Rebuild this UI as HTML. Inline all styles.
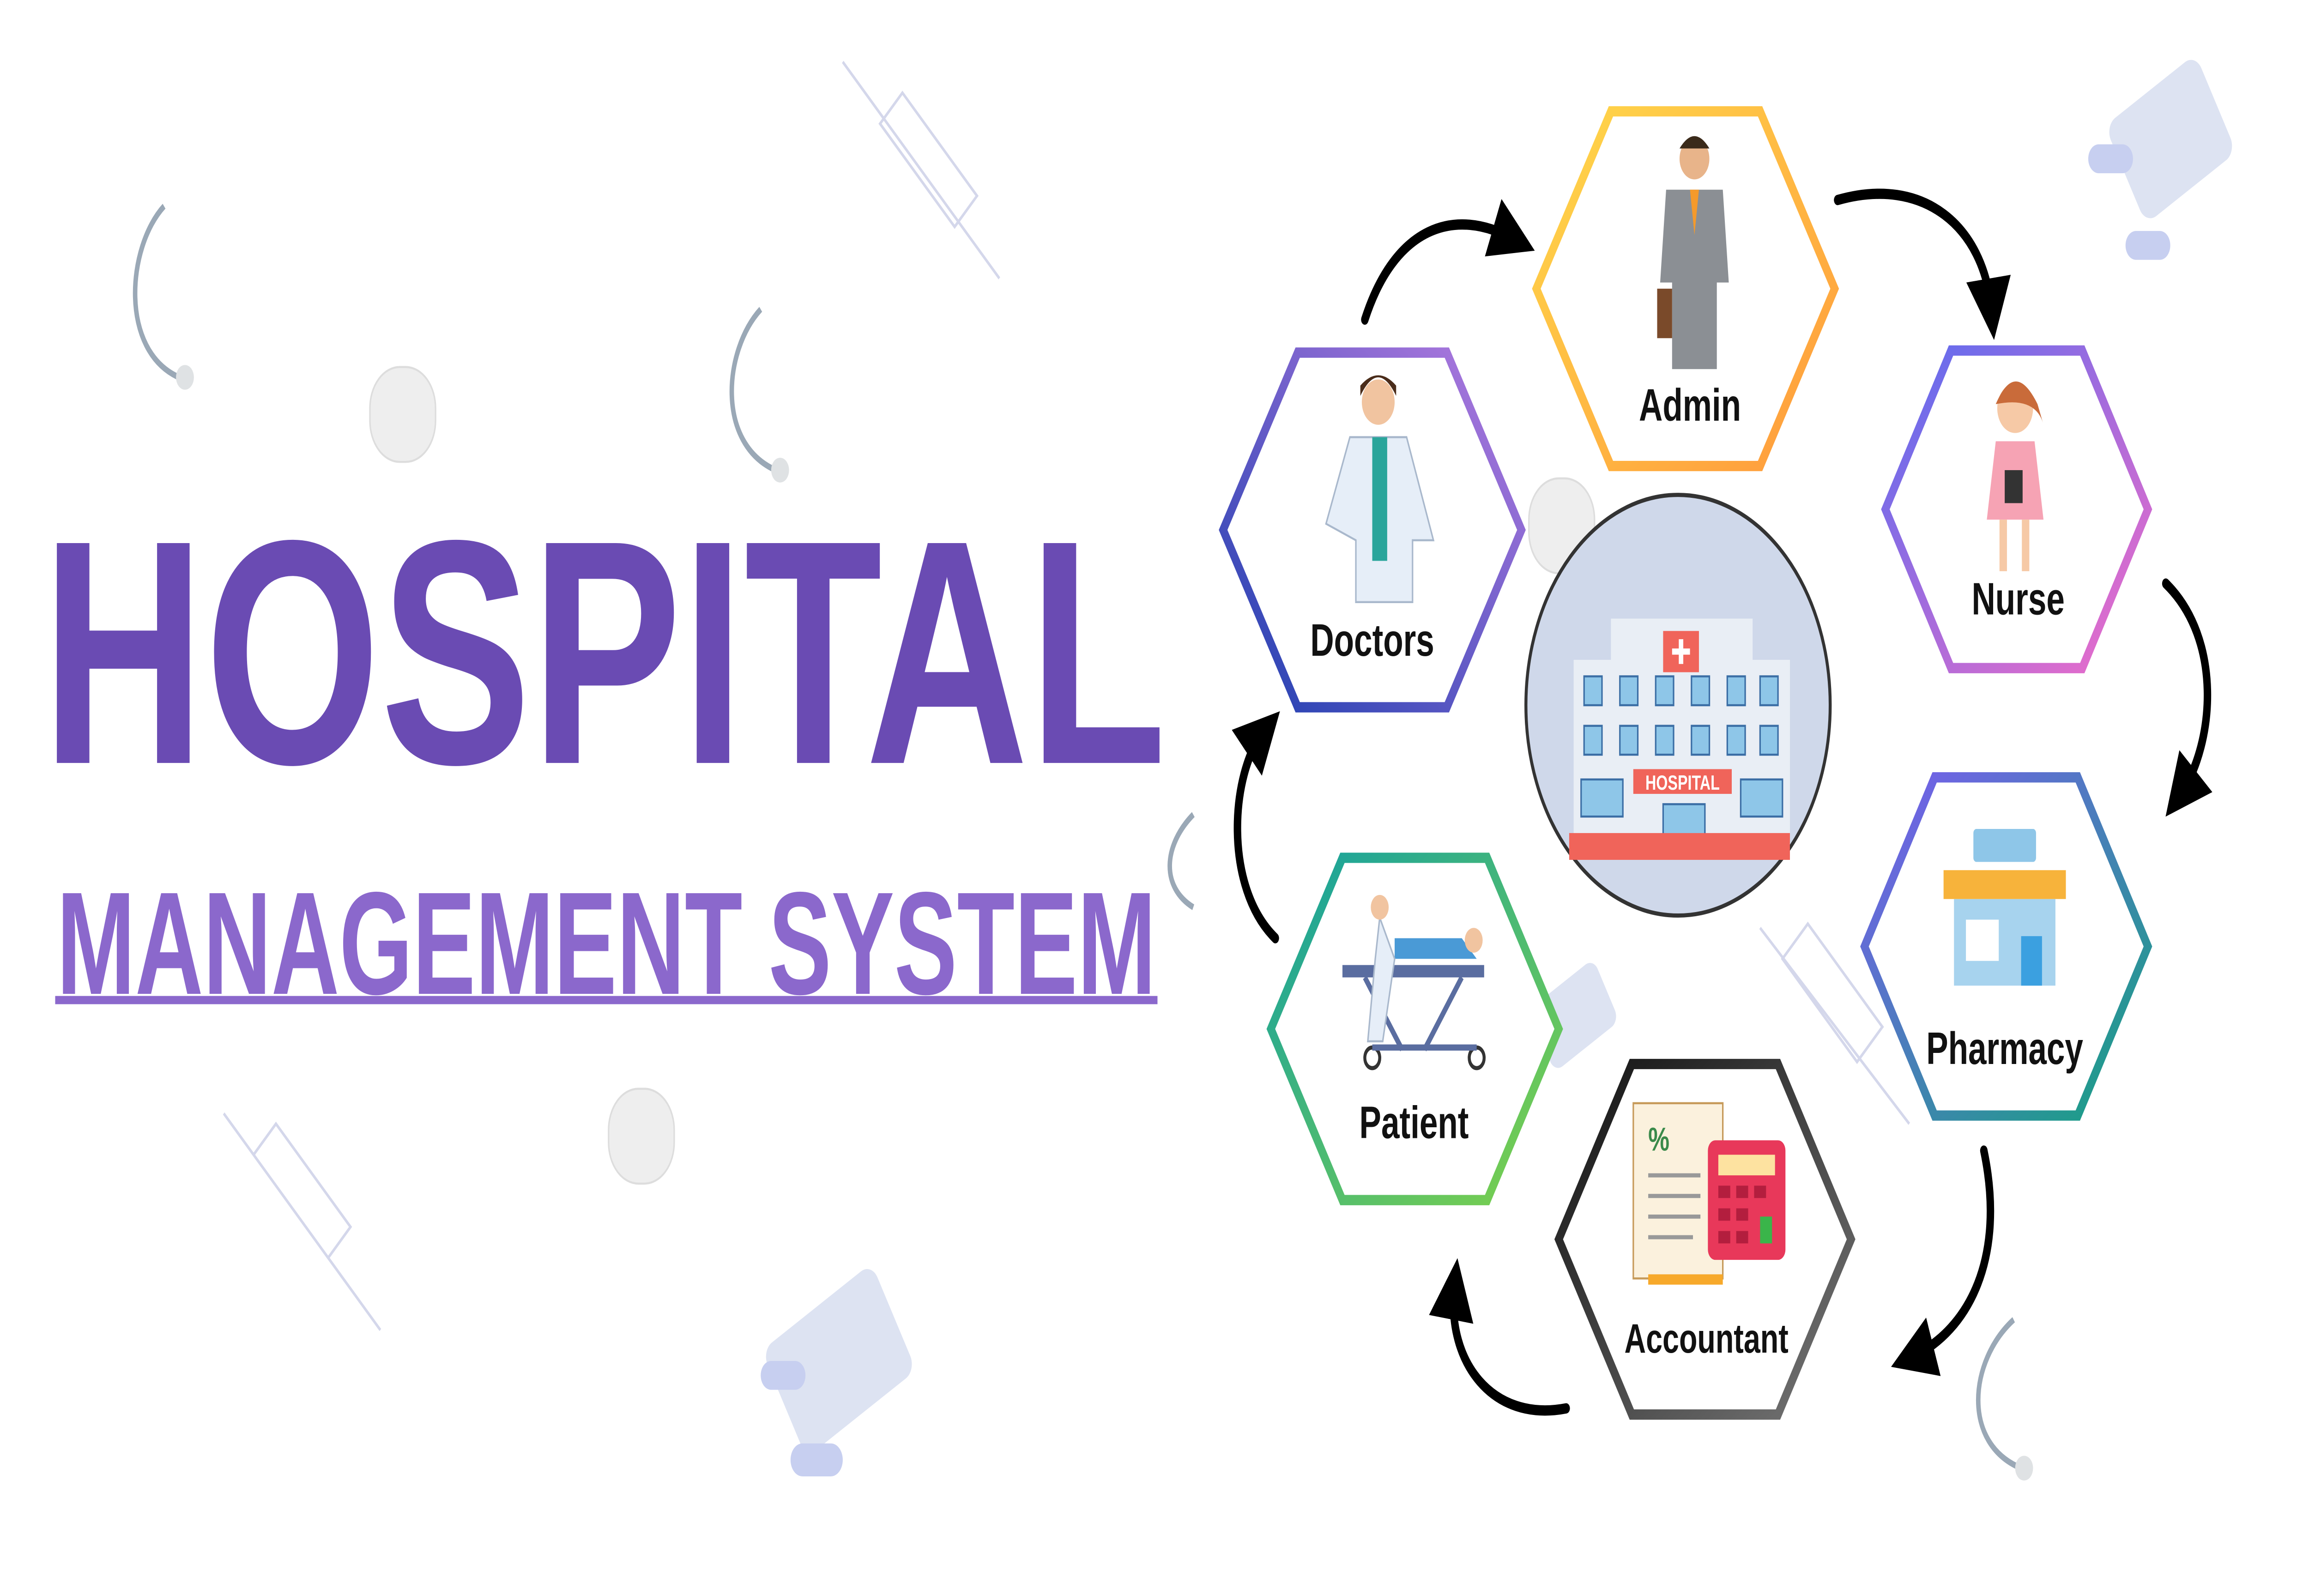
<!DOCTYPE html>
<html><head><meta charset="utf-8"><style>html,body{margin:0;padding:0;background:#fff;width:100%;height:100%;overflow:hidden}svg{display:block;width:100vw;height:100vh}</style></head>
<body>
<svg viewBox="0 0 1548 774" preserveAspectRatio="none" xmlns="http://www.w3.org/2000/svg" font-family="Liberation Sans, sans-serif">
<defs>
<linearGradient id="gA" x1="0" y1="0" x2="1" y2="1"><stop offset="0" stop-color="#ffd84a"/><stop offset="1" stop-color="#ff9a3c"/></linearGradient>
<linearGradient id="gD" x1="0" y1="1" x2="1" y2="0"><stop offset="0" stop-color="#1f3fb0"/><stop offset="1" stop-color="#b47be0"/></linearGradient>
<linearGradient id="gN" x1="0" y1="0" x2="1" y2="1"><stop offset="0" stop-color="#5b6cf0"/><stop offset="1" stop-color="#f06cc8"/></linearGradient>
<linearGradient id="gP" x1="0" y1="0" x2="1" y2="1"><stop offset="0" stop-color="#7a5cf0"/><stop offset="1" stop-color="#14a37f"/></linearGradient>
<linearGradient id="gC" x1="0" y1="0" x2="1" y2="1"><stop offset="0" stop-color="#111"/><stop offset="1" stop-color="#777"/></linearGradient>
<linearGradient id="gT" x1="0" y1="0" x2="1" y2="1"><stop offset="0" stop-color="#14a0a0"/><stop offset="1" stop-color="#7fd24a"/></linearGradient>
<marker id="ar" markerWidth="6" markerHeight="6" refX="3" refY="3" orient="auto" markerUnits="strokeWidth"><path d="M0,0 L6,3 L0,6 Z" fill="#000"/></marker>
</defs>
<rect width="1548" height="774" fill="#fff"/>

<g fill="none" stroke="#c9cde6" stroke-width="1.5" opacity="0.8">
<path d="M565,30 L670,135 M590,60 L640,110 L655,95 L605,45 Z"/>
<path d="M150,540 L255,645 M170,560 L220,610 L235,595 L185,545 Z"/>
<path d="M1180,450 L1280,545 M1195,465 L1245,515 L1262,498 L1212,448 Z"/>
</g>
<g fill="none" stroke="#9aa8b6" stroke-width="3">
<path d="M110,100 C85,120 80,170 120,183"/><path d="M510,150 C485,170 480,215 520,228"/><path d="M1350,640 C1320,660 1315,700 1355,712"/><path d="M800,395 C780,410 778,430 800,440"/>
</g>
<g fill="#dfe2e4"><circle cx="124" cy="183" r="6"/><circle cx="523" cy="228" r="6"/><circle cx="1357" cy="712" r="6"/></g>
<g fill="#eeeeee" stroke="#ddd"><rect x="248" y="178" width="44" height="46" rx="20"/><rect x="408" y="528" width="44" height="46" rx="20"/><rect x="1025" y="232" width="44" height="46" rx="20"/></g>
<g fill="#dde3f2"><rect x="1420" y="40" width="70" height="55" rx="8" transform="rotate(-30 1455 67)"/><rect x="520" y="630" width="85" height="60" rx="8" transform="rotate(-30 562 660)"/><rect x="1030" y="475" width="50" height="35" rx="6" transform="rotate(-30 1055 492)"/></g>
<g fill="#c7cff0"><rect x="1400" y="70" width="30" height="14" rx="7"/><rect x="1425" y="112" width="30" height="14" rx="7"/><rect x="510" y="660" width="30" height="14" rx="7"/><rect x="530" y="700" width="35" height="16" rx="8"/></g>

<text x="28" y="370" font-size="155" font-weight="bold" fill="#6a4bb3" textLength="754" lengthAdjust="spacingAndGlyphs">HOSPITAL</text>
<text x="38" y="482" font-size="71" font-weight="bold" fill="#8b68cc" textLength="737" lengthAdjust="spacingAndGlyphs">MANAGEMENT SYSTEM</text>
<rect x="37" y="483" width="739" height="4" fill="#8b68cc"/>

<g fill="none" stroke="#000" stroke-width="5" stroke-linecap="round">
<path d="M915,155 C935,110 975,100 1015,116" marker-end="url(#ar)"/>
<path d="M1232,97 C1290,85 1330,110 1335,150" marker-end="url(#ar)"/>
<path d="M1452,283 C1490,310 1485,360 1462,385" marker-end="url(#ar)"/>
<path d="M1330,558 C1345,610 1320,645 1282,658" marker-end="url(#ar)"/>
<path d="M1050,683 C1000,690 970,660 975,625" marker-end="url(#ar)"/>
<path d="M855,455 C820,430 825,375 847,355" marker-end="url(#ar)"/>
</g>

<g fill="#fff" stroke-width="5">
<polygon points="1030,140 1080,54 1180,54 1230,140 1180,226 1080,226" stroke="url(#gA)"/>
<polygon points="820,257 870,171 970,171 1020,257 970,343 870,343" stroke="url(#gD)"/>
<polygon points="1264,247 1308,170 1396,170 1440,247 1396,324 1308,324" stroke="url(#gN)"/>
<polygon points="1250,459 1297,377 1393,377 1440,459 1393,541 1297,541" stroke="url(#gP)"/>
<polygon points="1045,601 1094,516 1192,516 1241,601 1192,686 1094,686" stroke="url(#gC)"/>
<polygon points="852,499 900,416 997,416 1045,499 997,582 900,582" stroke="url(#gT)"/>
</g>

<circle cx="1125" cy="342" r="102" fill="#cfd8ea" stroke="#333" stroke-width="2"/>
<rect x="1055" y="320" width="145" height="85" fill="#e9eef5"/>
<rect x="1080" y="300" width="95" height="22" fill="#e9eef5"/>
<rect x="1115" y="306" width="24" height="20" fill="#f0645a"/><path d="M1127,310 v12 M1121,316 h12" stroke="#fff" stroke-width="3"/>
<g fill="#8ec6e8" stroke="#3b6ea5" stroke-width="1"><rect x="1062" y="328" width="12" height="14"/><rect x="1086" y="328" width="12" height="14"/><rect x="1110" y="328" width="12" height="14"/><rect x="1134" y="328" width="12" height="14"/><rect x="1158" y="328" width="12" height="14"/><rect x="1180" y="328" width="12" height="14"/>
<rect x="1062" y="352" width="12" height="14"/><rect x="1086" y="352" width="12" height="14"/><rect x="1110" y="352" width="12" height="14"/><rect x="1134" y="352" width="12" height="14"/><rect x="1158" y="352" width="12" height="14"/><rect x="1180" y="352" width="12" height="14"/>
<rect x="1060" y="378" width="28" height="18"/><rect x="1167" y="378" width="28" height="18"/><rect x="1115" y="390" width="28" height="15"/></g>
<rect x="1095" y="373" width="66" height="12" fill="#f0645a"/><text x="1128" y="383" font-size="10" font-weight="bold" fill="#fff" text-anchor="middle">HOSPITAL</text>
<rect x="1052" y="404" width="148" height="13" fill="#f0645a"/>

<circle cx="1136" cy="77" r="10" fill="#e8b48a"/><path d="M1126,72 q10,-12 20,0" fill="#3a2a1a"/>
<path d="M1117,92 h38 l4,45 h-8 v42 h-30 v-42 h-8 z" fill="#8b8f94"/><path d="M1133,92 l3,22 l3,-22 z" fill="#f59a2b"/>
<rect x="1111" y="140" width="10" height="24" fill="#7a4a2a"/>
<circle cx="924" cy="195" r="11" fill="#f1c4a0"/><path d="M912,192 q12,-18 24,0 v-5 q-12,-10 -24,0z" fill="#4a2c1a"/>
<path d="M905,212 h38 l18,50 h-14 v30 h-38 v-30 l-20,-8 z" fill="#e6eef8" stroke="#a9b8cc"/><path d="M920,212 h10 v60 h-10z" fill="#2aa59b"/>
<circle cx="1351" cy="198" r="12" fill="#f6c9a6"/><path d="M1338,196 q13,-22 28,0 l4,10 q-5,-14 -32,-10z" fill="#c96b3a"/>
<path d="M1338,214 h26 l6,38 h-38z" fill="#f6a3b4"/><path d="M1343,252 v25 M1358,252 v25" stroke="#f6c9a6" stroke-width="5"/><rect x="1344" y="228" width="12" height="16" fill="#333"/>
<rect x="1323" y="402" width="42" height="16" fill="#8ec6e8" rx="2"/><rect x="1310" y="436" width="68" height="42" fill="#a7d3ee"/><path d="M1303,422 h82 v14 h-82z" fill="#f7b33b"/><rect x="1318" y="446" width="22" height="20" fill="#fff"/><rect x="1355" y="454" width="14" height="24" fill="#3ba0e0"/>
<path d="M1095,535 h60 v85 h-60 z" fill="#fbf1dd" stroke="#c69a5a"/><text x="1105" y="558" font-size="16" fill="#3a8a4a" font-weight="bold">%</text>
<g stroke="#999" stroke-width="2"><path d="M1105,570 h35 M1105,580 h35 M1105,590 h35 M1105,600 h30"/></g>
<rect x="1145" y="553" width="52" height="58" rx="5" fill="#e8385a"/><rect x="1152" y="560" width="38" height="10" fill="#fde2a0"/>
<g fill="#b31e3e"><rect x="1152" y="575" width="8" height="6"/><rect x="1164" y="575" width="8" height="6"/><rect x="1176" y="575" width="8" height="6"/><rect x="1152" y="586" width="8" height="6"/><rect x="1164" y="586" width="8" height="6"/><rect x="1152" y="597" width="8" height="6"/><rect x="1164" y="597" width="8" height="6"/></g><rect x="1180" y="590" width="8" height="13" fill="#3ab54a"/>
<rect x="1105" y="618" width="50" height="5" fill="#f7a92b"/>
<rect x="900" y="468" width="95" height="6" fill="#5a6da0"/><path d="M915,474 l25,35 M980,474 l-25,35" stroke="#5a6da0" stroke-width="3"/><circle cx="920" cy="513" r="5" fill="none" stroke="#333" stroke-width="2"/><circle cx="990" cy="513" r="5" fill="none" stroke="#333" stroke-width="2"/><path d="M920,508 h70" stroke="#5a6da0" stroke-width="3"/>
<path d="M935,455 h45 l10,10 h-55z" fill="#4a9ad6"/><circle cx="988" cy="456" r="6" fill="#f1c4a0"/>
<path d="M925,445 l10,20 l-8,40 h-10 l5,-40 z" fill="#e6eef8" stroke="#a9b8cc"/><circle cx="925" cy="440" r="6" fill="#f1c4a0"/>

<g font-size="22" font-weight="bold" fill="#111" text-anchor="middle">
<text x="1133" y="204">Admin</text>
<text x="920" y="318">Doctors</text>
<text x="1353" y="298">Nurse</text>
<text x="1344" y="516">Pharmacy</text>
<text x="1144" y="656" font-size="20">Accountant</text>
<text x="948" y="552">Patient</text>
</g>
</svg>
</body></html>
